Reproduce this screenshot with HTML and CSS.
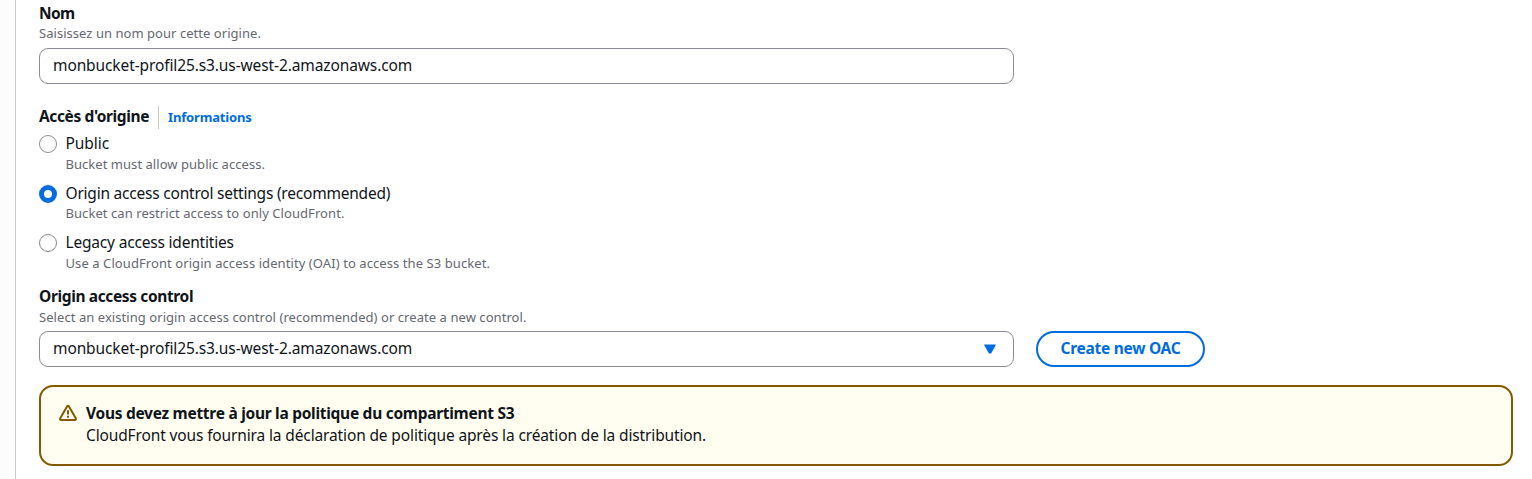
FILE: index.html
```html
<!DOCTYPE html>
<html lang="fr">
<head>
<meta charset="utf-8">
<title>Origine</title>
<link rel="stylesheet" href="styles.css">
</head>
<body>
<div class="page">
  <main class="panel">
    <section class="field first">
      <div class="label"><span class="t-nom">Nom</span></div>
      <div class="hint"><span class="t-saisissez">Saisissez un nom pour cette origine.</span></div>
      <div class="control"><span class="t-bucket">monbucket-profil25.s3.us-west-2.amazonaws.com</span></div>
    </section>
    <section class="access">
      <div class="access-head">
        <span class="label t-acces">Accès d'origine</span>
        <a class="info"><span class="t-info">Informations</span></a>
      </div>
      <div class="option">
        <span class="radio"></span>
        <div><div class="name"><span class="t-public">Public</span></div><div class="hint"><span class="t-must">Bucket must allow public access.</span></div></div>
      </div>
      <div class="option">
        <span class="radio checked"></span>
        <div><div class="name"><span class="t-oacs">Origin access control settings (recommended)</span></div><div class="hint raised"><span class="t-can">Bucket can restrict access to only CloudFront.</span></div></div>
      </div>
      <div class="option">
        <span class="radio"></span>
        <div><div class="name"><span class="t-legacy">Legacy access identities</span></div><div class="hint"><span class="t-use">Use a CloudFront origin access identity (OAI) to access the S3 bucket.</span></div></div>
      </div>
    </section>
    <section class="field">
      <div class="label"><span class="t-oac">Origin access control</span></div>
      <div class="hint"><span class="t-select">Select an existing origin access control (recommended) or create a new control.</span></div>
      <div class="select-row">
        <div class="control"><span class="t-bucket">monbucket-profil25.s3.us-west-2.amazonaws.com</span>
          <svg class="caret" width="12" height="10" viewBox="0 0 12 10"><path d="M.8 1h10.4L6.7 8.9H5.3z" fill="#006ce0" stroke="#006ce0" stroke-width="1.2" stroke-linejoin="round"/></svg>
        </div>
        <div class="button"><span class="t-create">Create new OAC</span></div>
      </div>
    </section>
    <section class="alert">
      <svg class="warn" width="18" height="18" viewBox="0 0 18 18" fill="none" stroke="#855900" stroke-width="2" stroke-linejoin="round"><path d="M8.2 2.2Q9 1.4 9.8 2.2L16.9 14.6Q17.1 16 16 16H2Q.9 16 1.1 14.6Z"/><path d="M9 6.3v4.2M9 11.7v2"/></svg>
      <div>
        <div class="alert-title"><span class="t-vous">Vous devez mettre à jour la politique du compartiment S3</span></div>
        <div class="name"><span class="t-cf">CloudFront vous fournira la déclaration de politique après la création de la distribution.</span></div>
      </div>
    </section>
  </main>
</div>
</body>
</html>
```
FILE: styles.css
```css
* { box-sizing: border-box; }
body { margin: 0; background: #fff; color: #0f141a; font: 15.5px/22px "Noto Sans", "Open Sans", sans-serif; overflow: hidden; }
.page { height: 479px; padding-left: 15px; background: #fcfcfd; }
.panel { height: 479px; padding: 3px 19px 0 23px; border-left: 1px solid #c6c6cd; background: #fff; }
span { white-space: nowrap; }
.label, .alert-title { font-weight: 700; height: 22px; line-height: 20px; }
.name { height: 22px; line-height: 20px; }
.hint { height: 18px; font-size: 13px; line-height: 18px; color: #656871; }
.raised { margin-top: -1px; }
.first .hint { margin-top: -1px; }
.control { display: flex; align-items: center; justify-content: space-between; width: 975px; height: 36px; padding: 0 17px 2px 13px; border: 1px solid #8c8c94; border-radius: 9px; }
.field > .control { margin-top: 6px; }
.select-row { margin-top: 5px; }
.access { margin-top: 22px; height: 180px; }
.access-head { display: flex; align-items: center; height: 23px; margin-bottom: 4px; }
.access-head .label { height: 23px; }
.info { display: flex; align-items: center; height: 23px; margin-left: 9px; padding: 0 0 2px 9px; border-left: 1px solid #c6c6cd; color: #006ce0; font-size: 13px; font-weight: 700; }
.option { display: flex; gap: 8.5px; height: 49.5px; }
.radio { width: 18px; height: 18px; margin-top: 2px; border: 1px solid #8c8c94; border-radius: 50%; }
.checked { border: 5.5px solid #006ce0; }
.select-row { display: flex; gap: 22px; }
.caret { margin-top: 2px; }
.button { display: flex; align-items: center; justify-content: center; width: 169px; height: 36px; padding-bottom: 2px; border: 2px solid #006ce0; border-radius: 18px; color: #006ce0; font-weight: 700; }
.alert { display: flex; gap: 9px; height: 81px; margin-top: 18px; padding: 16px 18px; border: 2px solid #855900; border-radius: 14px; background: #fffef0; }
.warn { margin-top: 1px; }

/* Tracking per text run */
.t-nom { letter-spacing: -0.6px; }
.t-saisissez, .t-must { letter-spacing: 0.04px; }
.t-bucket { letter-spacing: -0.11px; }
.t-acces { letter-spacing: -0.38px; }
.t-info { letter-spacing: -0.17px; }
.t-public { letter-spacing: -0.07px; }
.t-oacs { letter-spacing: -0.22px; }
.t-can { letter-spacing: 0.065px; }
.t-legacy { letter-spacing: -0.19px; }
.t-use { letter-spacing: 0.08px; }
.t-oac { letter-spacing: -0.37px; }
.t-select { letter-spacing: 0.06px; }
.t-create { letter-spacing: -0.28px; }
.t-vous { letter-spacing: -0.28px; }
.t-cf { letter-spacing: -0.135px; }
```
